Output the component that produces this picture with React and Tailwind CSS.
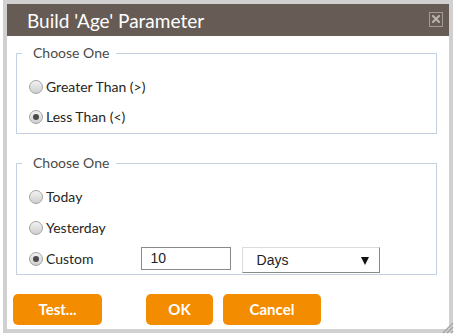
import React from "react";

function Radio({ checked }) {
  return (
    <span className="relative inline-flex h-[14px] w-[14px] shrink-0 items-center justify-center rounded-full border border-[#a3a3a3] bg-gradient-to-b from-[#f2f2f2] to-[#cfcfcf]">
      {checked && <span className="h-[6px] w-[6px] rounded-full bg-[#4a4a4a]" />}
    </span>
  );
}

function Option({ checked, label, h = "h-[30px]", children }) {
  return (
    <div className={`flex items-center ${h}`}>
      <Radio checked={checked} />
      <span className="ml-[3px] text-[14px] leading-none text-[#262626]">{label}</span>
      {children}
    </div>
  );
}

function Fieldset({ className, children }) {
  return (
    <fieldset className={`ml-[9px] mr-[12px] border border-[#c3d1e1] ${className}`}>
      <legend className="ml-[5px] pl-[11px] pr-[7px] text-[14px] leading-[20px] text-[#4a4a4a]">Choose One</legend>
      {children}
    </fieldset>
  );
}

export default function App() {
  return (
    <div className="relative h-[336px] w-[458px] bg-white" style={{ fontFamily: "Lato, 'Open Sans', sans-serif" }}>
      <div className="ml-[3px] flex h-[333px] w-[450px] flex-col border-[4px] border-[#d0d0d0] bg-white">
        <div className="flex h-[32px] shrink-0 items-center justify-between bg-[#665c55] pl-[20px] pr-[6px]">
          <span className="text-[19px] leading-none text-white">Build 'Age' Parameter</span>
          <span className="mb-[2px] flex h-[15px] w-[14px] items-center justify-center border border-[#a39b95]">
            <svg width="8" height="8" viewBox="0 0 8 8">
              <path d="M1 1L7 7M7 1L1 7" stroke="#bcb5af" strokeWidth="2" strokeLinecap="square" />
            </svg>
          </span>
        </div>

        <Fieldset className="mt-[7px] pb-[1px]">
          <div className="pl-[12px] pt-[9px]">
            <Option label="Greater Than (>)" />
            <Option checked label="Less Than (<)" />
          </div>
        </Fieldset>

        <Fieldset className="mt-[19px] pb-0">
          <div className="pl-[12px] pt-[8px]">
            <Option label="Today" h="h-[31px]" />
            <Option label="Yesterday" h="h-[31px]" />
            <Option checked label="Custom" h="h-[31px]">
              <div className="ml-[47px] flex h-[23px] w-[90px] items-center border border-[#8a8a8a] pl-[9px] text-[14px] text-[#1e1e28]" style={{ fontFamily: "'Liberation Sans', Arial, sans-serif" }}>
                10
              </div>
              <div className="ml-[11px] mt-[3px] flex h-[26px] w-[138px] items-center justify-between border border-[#dcdcdc] border-b-[#8a8a8a] border-r-[#8a8a8a] pl-[14px] pr-[10px] text-[14px] text-[#1e1e1e]" style={{ fontFamily: "'Liberation Sans', Arial, sans-serif" }}>
                <span>Days</span>
                <svg width="8" height="9" viewBox="0 0 8 9">
                  <path d="M0 1H8L4 9Z" fill="#111" />
                </svg>
              </div>
            </Option>
          </div>
        </Fieldset>

        <div className="mt-[19px] flex pl-[6px]">
          <button className="h-[31px] w-[89px] rounded-[5px] bg-[#f48c00] text-[15px] font-bold text-white">Test...</button>
          <button className="ml-[44px] h-[31px] w-[67px] rounded-[5px] bg-[#f48c00] text-[15px] font-bold text-white">OK</button>
          <button className="ml-[10px] h-[31px] w-[98px] rounded-[5px] bg-[#f48c00] text-[15px] font-bold text-white">Cancel</button>
        </div>
      </div>
      <svg className="absolute bottom-[2px] right-[4px]" width="14" height="14" viewBox="0 0 14 14">
        <path d="M13 3L3 13M13 7L7 13M13 11L11 13" stroke="#a8a8a8" strokeWidth="1.5" />
      </svg>
    </div>
  );
}
